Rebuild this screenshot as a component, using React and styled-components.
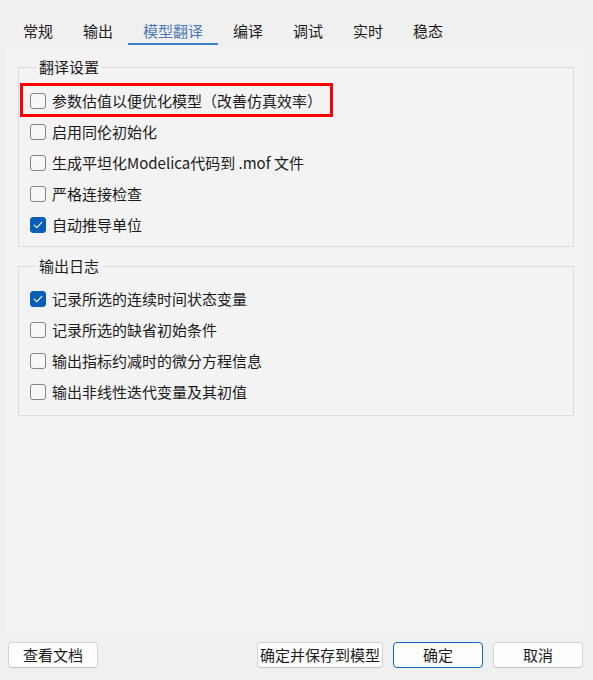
import styled, { createGlobalStyle, css } from "styled-components";
import { useState } from "react";

const GlobalStyle = createGlobalStyle`
  html, body {
    margin: 0;
    padding: 0;
    background: #f0f0f0;
  }
  body {
    font-family: "Noto Sans CJK SC", "Noto Sans", sans-serif;
    color: #1b1b1b;
  }
`;

const Window = styled.div`
  width: 593px;
  height: 680px;
  display: flex;
  flex-direction: column;
  background: #f0f0f0;
  font-size: 15px;
`;

const TabBar = styled.div`
  height: 46px;
  box-sizing: border-box;
  padding: 16px 0 0 8px;
  display: flex;
  align-items: flex-start;
`;

const Tab = styled.div`
  height: 29px;
  box-sizing: border-box;
  padding: 2px 15px 0;
  display: flex;
  align-items: center;
  line-height: 20px;
  cursor: default;
  border-bottom: 2px solid transparent;

  ${props =>
    props.active &&
    css`
      color: #4c79b9;
      border-bottom-color: #3c82cf;
    `
  }
`;

const Pane = styled.div`
  flex: 1;
  margin: 0 9px 0 7px;
  background: #f3f3f3;
  padding: 11px 10px 0 11px;
  display: flex;
  flex-direction: column;
  gap: 9px;
`;

const Group = styled.fieldset`
  margin: 0;
  padding: ${props => props.top}px 11px ${props => props.bottom}px;
  border: 1px solid #dcdcdc;
  min-width: 0;
`;

const Legend = styled.legend`
  padding: 0 3px;
  margin-left: 6px;
  line-height: 20px;
`;

const Row = styled.label`
  position: relative;
  height: 31px;
  width: max-content;
  display: flex;
  align-items: center;
  gap: 6px;
  cursor: default;

  ${props =>
    props.highlight &&
    css`
      &::after {
        content: "";
        position: absolute;
        top: -2px;
        bottom: -1px;
        left: -10px;
        right: -11px;
        border: 3px solid #ff0000;
        pointer-events: none;
      }
    `
  }
`;

const Box = styled.span`
  width: 16px;
  height: 16px;
  box-sizing: border-box;
  border-radius: 3px;
  border: 1px solid #858585;
  background: #f7f7f7;
  display: flex;
  align-items: center;
  justify-content: center;
  flex-shrink: 0;

  ${props =>
    props.checked &&
    css`
      border-color: #0a5eb5;
      background: #0a5eb5;
    `
  }
`;

const Label = styled.span`
  line-height: 20px;
`;

const Footer = styled.div`
  height: 46px;
  box-sizing: border-box;
  padding: 8px 10px 0 8px;
  display: flex;
  align-items: flex-start;
  gap: 10px;
`;

const Spacer = styled.div`
  flex: 1;
`;

const Button = styled.button`
  height: 26px;
  min-width: 90px;
  padding: 0 2px;
  box-sizing: border-box;
  border-radius: 4px;
  border: 1px solid #d3d3d3;
  border-bottom-color: #c4c4c4;
  background: #fdfdfd;
  font-family: inherit;
  font-size: 15px;
  line-height: 20px;
  color: #1b1b1b;
  white-space: nowrap;

  ${props =>
    props.primary &&
    css`
      border: 1px solid #0a67c2;
    `
  }
`;

const tabs = ["常规", "输出", "模型翻译", "编译", "调试", "实时", "稳态"];

const translateOptions = [
  { text: "参数估值以便优化模型（改善仿真效率）", checked: false, highlight: true },
  { text: "启用同伦初始化", checked: false },
  { text: "生成平坦化Modelica代码到 .mof 文件", checked: false },
  { text: "严格连接检查", checked: false },
  { text: "自动推导单位", checked: true },
];

const logOptions = [
  { text: "记录所选的连续时间状态变量", checked: true },
  { text: "记录所选的缺省初始条件", checked: false },
  { text: "输出指标约减时的微分方程信息", checked: false },
  { text: "输出非线性迭代变量及其初值", checked: false },
];

function Check({ checked }) {
  return (
    <Box checked={checked}>
      {checked &&
        <svg width="10" height="8" viewBox="0 0 10 8">
          <path d="M1.2 4.2 L3.8 6.6 L8.8 1.4" fill="none" stroke="#fff" strokeWidth="1.1" strokeLinecap="round" strokeLinejoin="round" />
        </svg>
      }
    </Box>
  );
}

function OptionList({ items }) {
  const [values, setValues] = useState(items.map(i => i.checked));

  const toggle = idx => {
    setValues(values.map((v, i) => (i === idx ? !v : v)));
  };

  return items.map((item, idx) => (
    <Row key={item.text} highlight={item.highlight} onClick={() => toggle(idx)}>
      <Check checked={values[idx]} />
      <Label>{item.text}</Label>
    </Row>
  ));
}

function App() {
  const [active, setActive] = useState(2);

  return (
    <>
      <GlobalStyle />
      <Window>
        <TabBar>
          {tabs.map((t, i) => (
            <Tab key={t} active={i === active} onClick={() => setActive(i)}>{t}</Tab>
          ))}
        </TabBar>
        <Pane>
          <Group top={8} bottom={6}>
            <Legend>翻译设置</Legend>
            <OptionList items={translateOptions} />
          </Group>
          <Group top={7} bottom={8}>
            <Legend>输出日志</Legend>
            <OptionList items={logOptions} />
          </Group>
        </Pane>
        <Footer>
          <Button>查看文档</Button>
          <Spacer />
          <Button>确定并保存到模型</Button>
          <Button primary>确定</Button>
          <Button>取消</Button>
        </Footer>
      </Window>
    </>
  );
}

export default App;
